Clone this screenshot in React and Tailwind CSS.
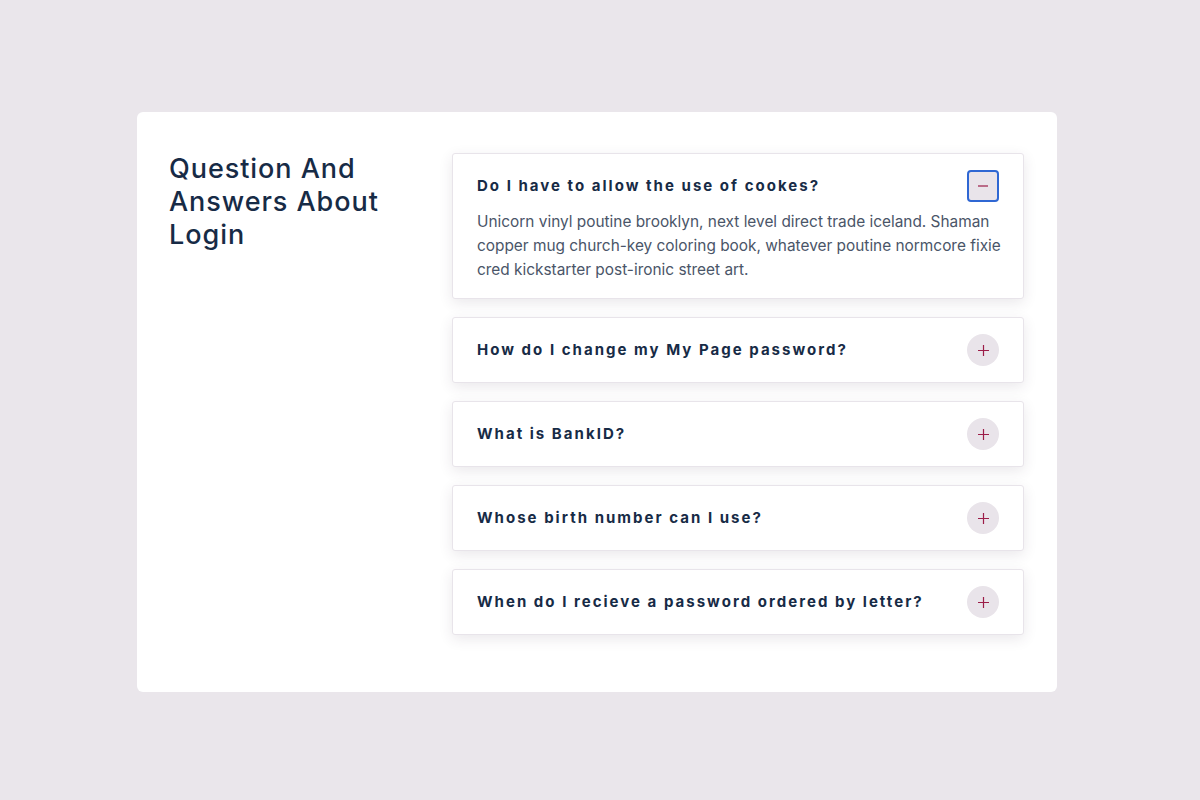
import React, { useState } from "react";

const items = [
  {
    q: "Do I have to allow the use of cookes?",
    a: "Unicorn vinyl poutine brooklyn, next level direct trade iceland. Shaman copper mug church-key coloring book, whatever poutine normcore fixie cred kickstarter post-ironic street art.",
  },
  { q: "How do I change my My Page password?", a: "" },
  { q: "What is BankID?", a: "" },
  { q: "Whose birth number can I use?", a: "" },
  { q: "When do I recieve a password ordered by letter?", a: "" },
];

export default function App() {
  const [open, setOpen] = useState(0);
  return (
    <div
      className="min-h-[800px] w-full bg-[#eae6eb] flex pl-[137px] pt-[112px]"
      style={{ fontFamily: "Inter, 'Noto Sans', sans-serif" }}
    >
      <div className="w-[920px] h-[580px] bg-white rounded-md pt-10 pl-8 pr-[33px] flex">
        <div className="w-[283px] shrink-0">
          <h2 className="text-[27px] leading-[33px] font-medium tracking-[0.035em] text-[#172b46] w-[235px]">
            Question And Answers About Login
          </h2>
        </div>
        <div className="flex-1 flex flex-col gap-[18px] pt-px">
          {items.map((it, i) => {
            const isOpen = open === i;
            return (
              <div
                key={i}
                className="border border-[#e8e4ea] rounded-[3px] bg-white shadow-[0_4px_14px_rgba(60,50,70,0.11)] px-6 py-4"
              >
                <div className="flex items-center justify-between">
                  <h3 className="text-[15px] font-bold tracking-[0.135em] text-[#172b46] pt-px">
                    {it.q}
                  </h3>
                  <button
                    onClick={() => setOpen(isOpen ? -1 : i)}
                    className={
                      isOpen
                        ? "w-8 h-8 rounded-[4px] border-2 border-[#2f67d3] bg-[#e9e4ea] flex items-center justify-center"
                        : "w-8 h-8 rounded-full bg-[#e9e4ea] flex items-center justify-center"
                    }
                  >
                    {isOpen ? (
                      <svg width="10" height="10" viewBox="0 0 10 10">
                        <path d="M0 5h10" stroke="#9c1d48" strokeWidth="1.2" />
                      </svg>
                    ) : (
                      <svg width="11" height="11" viewBox="0 0 11 11">
                        <path d="M0 5.5h11M5.5 0v11" stroke="#9c1d48" strokeWidth="1.2" />
                      </svg>
                    )}
                  </button>
                </div>
                {isOpen && (
                  <p className="mt-2 -mr-2 text-[15.4px] leading-6 text-[#4a5568]">
                    {it.a}
                  </p>
                )}
              </div>
            );
          })}
        </div>
      </div>
    </div>
  );
}
